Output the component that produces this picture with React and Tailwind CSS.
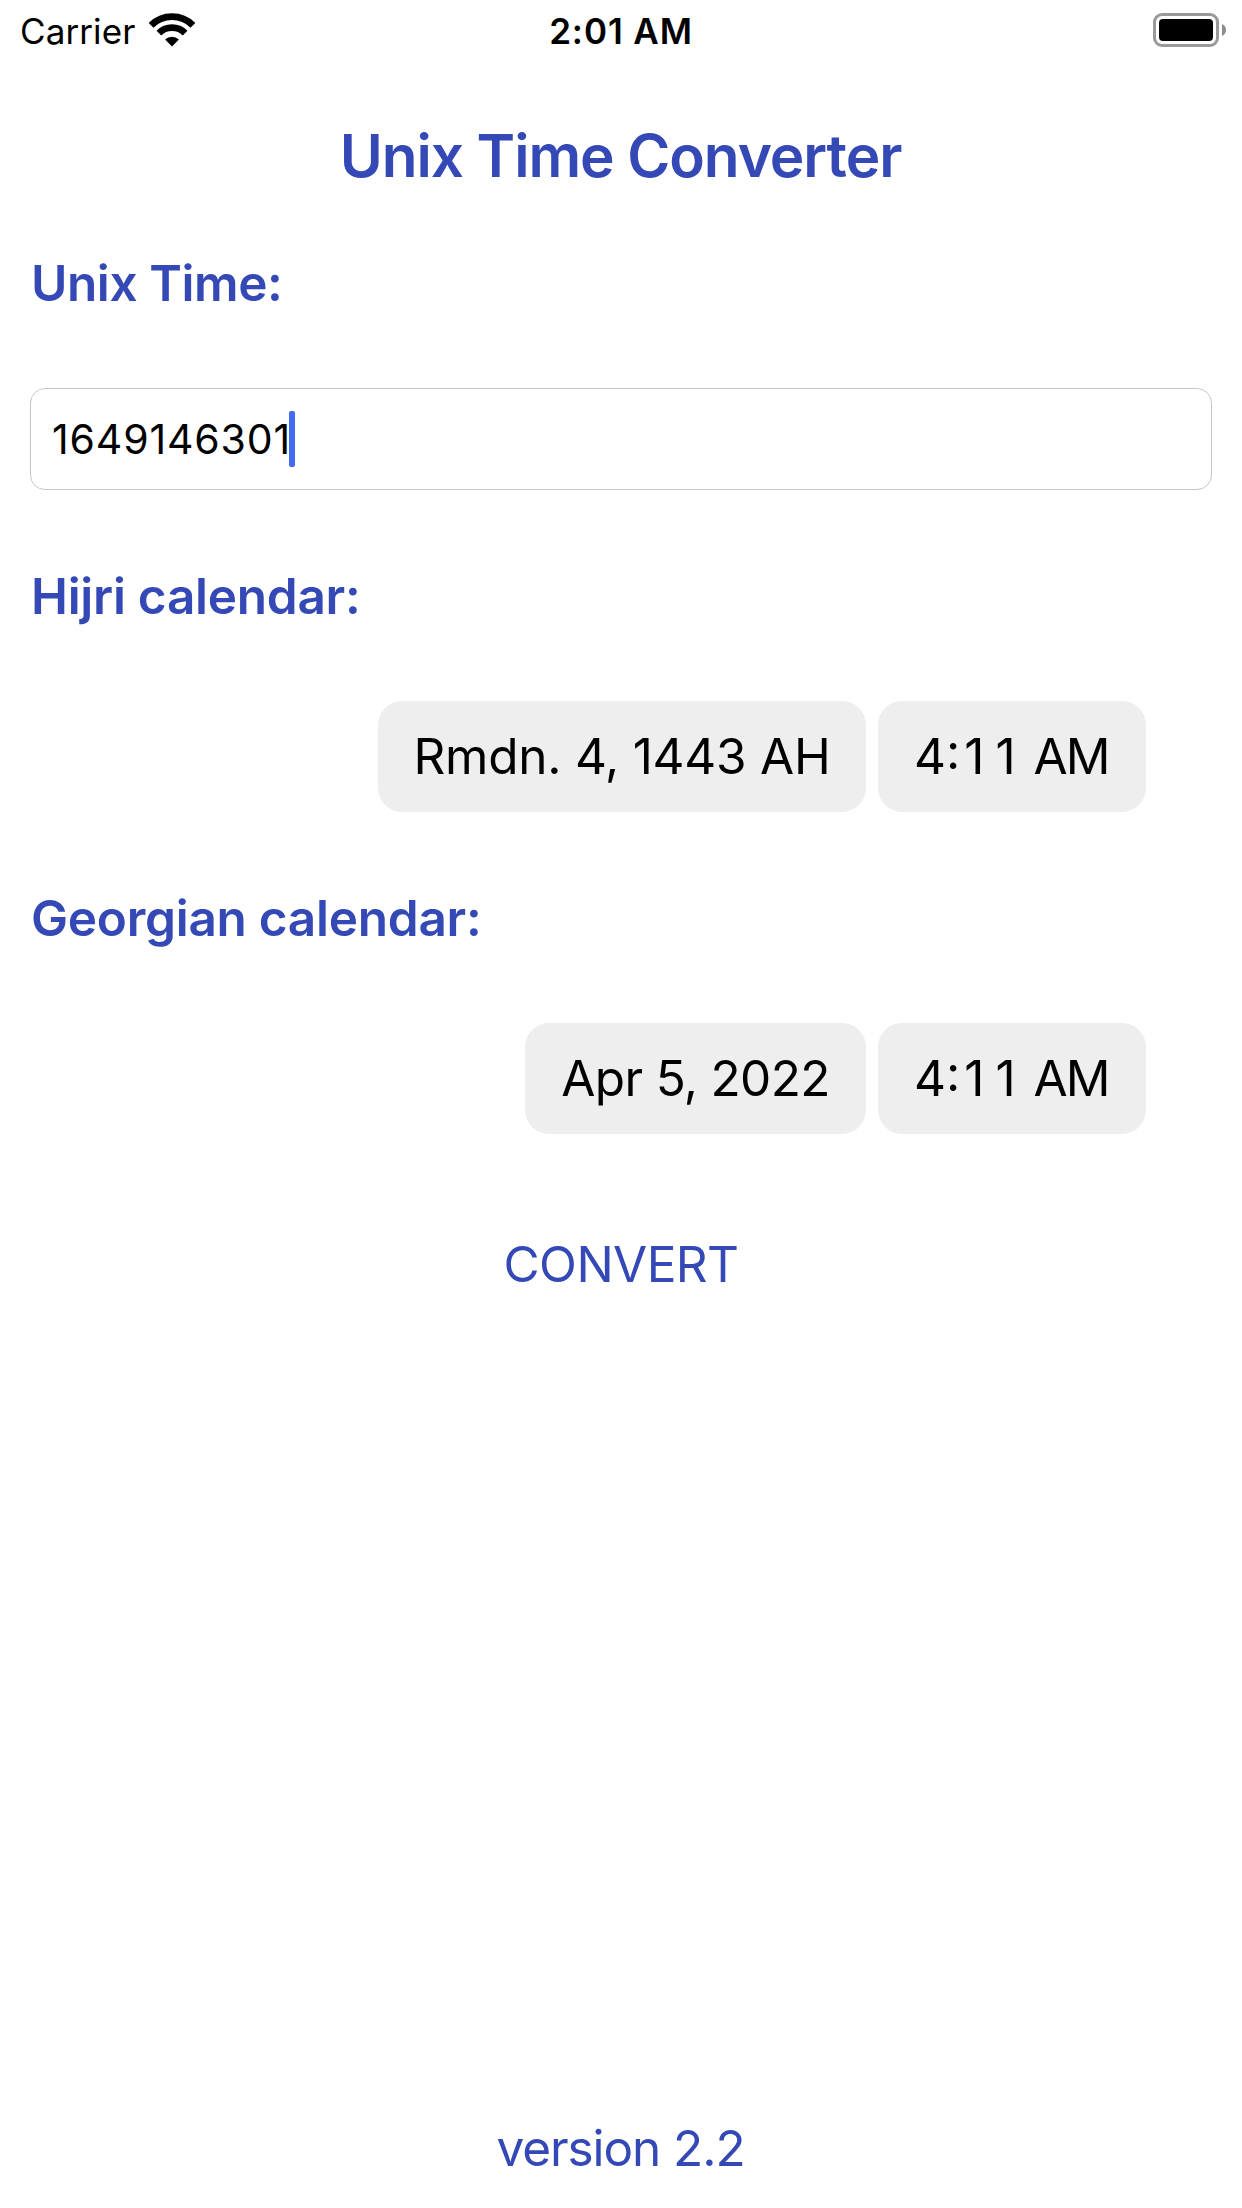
import React from "react";

function WifiIcon() {
  return (
    <svg className="mb-[2px] ml-[13px] h-[34px] w-[48px]" viewBox="0 0 48 34" fill="none" aria-hidden="true">
      <path d="M3.1 12.3a29.6 29.6 0 0 1 41.8 0" stroke="#000" strokeWidth="6.8" />
      <path d="M10.9 20.1a18.5 18.5 0 0 1 26.2 0" stroke="#000" strokeWidth="6.6" />
      <path d="M24 33.4l-6.9-6.9a9.8 9.8 0 0 1 13.8 0z" fill="#000" />
    </svg>
  );
}

function BatteryIcon() {
  return (
    <svg className="mb-[2px] h-[34px] w-[74px]" viewBox="0 0 74 34" aria-hidden="true">
      <rect x="1.5" y="1.5" width="63" height="31" rx="7.5" fill="none" stroke="#999" strokeWidth="3" />
      <rect x="6" y="6" width="54" height="22" rx="4" fill="#000" />
      <path d="M69 11c2.4 1 4 3.3 4 6s-1.6 5-4 6z" fill="#8c8c8c" />
    </svg>
  );
}

function StatusBar() {
  return (
    <header className="flex h-[62px] items-center text-[35px] leading-none text-black">
      <div className="flex flex-1 items-center pl-5">
        <span className="tracking-[0.1px]">Carrier</span>
        <WifiIcon />
      </div>
      <span className="mr-[5px] font-semibold tracking-[0.9px]">2:01 AM</span>
      <div className="flex flex-1 justify-end pr-[15px]">
        <BatteryIcon />
      </div>
    </header>
  );
}

function SectionLabel({ className, children }) {
  return (
    <h2 className={`pl-[31px] text-[49.5px] leading-[60px] font-semibold text-[#3449b6] ${className}`}>
      {children}
    </h2>
  );
}

function Chip({ className, children }) {
  return (
    <div className={`flex h-[111px] items-center rounded-[24px] bg-[#eeeeef] text-[49.5px] whitespace-nowrap text-black ${className}`}>
      {children}
    </div>
  );
}

function TimeChip() {
  return (
    <Chip className="w-[268px] pl-[36px]">
      <span>4:</span>
      <span className="ml-[4px] tracking-[11px]">11</span>
      <span className="ml-[7px] tracking-[-2px]">AM</span>
    </Chip>
  );
}

export default function App() {
  return (
    <div className="flex h-[2208px] w-[1242px] flex-col bg-white font-['Inter',sans-serif]">
      <StatusBar />
      <h1 className="mt-[58px] pr-[1px] text-center text-[58.5px] leading-[72px] font-semibold tracking-[-1.05px] text-[#3449b6]">
        Unix Time Converter
      </h1>

      <SectionLabel className="mt-[61px] tracking-[-0.42px]">Unix Time:</SectionLabel>
      <div className="mx-[30px] mt-[75px] flex h-[102px] items-center rounded-[15px] border border-[#c6c6c8] pl-[21px] text-[41px] text-black">
        <span className="pt-[2px] tracking-[0.86px]">1649146301</span>
        <span className="-ml-[2px] h-[56px] w-[6px] rounded-[2px] bg-[#446cf1]" />
      </div>

      <SectionLabel className="mt-[76px] tracking-[-0.26px]">Hijri calendar:</SectionLabel>
      <div className="mt-[75px] flex justify-end gap-3 pr-[96px]">
        <Chip className="w-[488px] justify-center tracking-[-0.25px]">Rmdn. 4, 1443 AH</Chip>
        <TimeChip />
      </div>

      <SectionLabel className="mt-[76px] tracking-[-0.26px]">Georgian calendar:</SectionLabel>
      <div className="mt-[75px] flex justify-end gap-3 pr-[96px]">
        <Chip className="w-[341px] justify-center tracking-[-0.66px]">Apr 5, 2022</Chip>
        <TimeChip />
      </div>

      <button className="mt-[100px] self-center text-[49.5px] leading-[60px] tracking-[-0.59px] text-[#3449b6]">
        CONVERT
      </button>
      <footer className="mt-auto pr-px pb-[30px] text-center text-[49.5px] leading-[60px] tracking-[-1.08px] text-[#3449b6]">
        version 2.2
      </footer>
    </div>
  );
}
